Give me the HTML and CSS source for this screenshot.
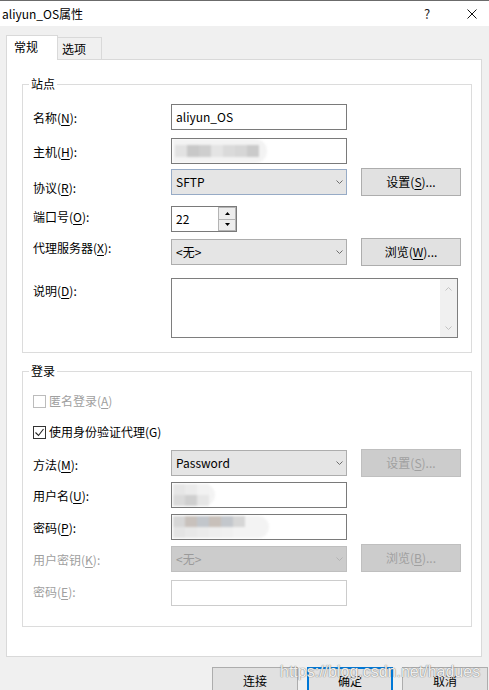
FILE: index.html
```html
<!DOCTYPE html>
<html lang="zh-CN">
<head>
<meta charset="utf-8">
<title>aliyun_OS属性</title>
<link rel="stylesheet" href="styles.css">
</head>
<body>
<div class="window">
  <header class="titlebar">
    <span class="title">aliyun_OS属性</span>
    <span class="help">?</span>
    <span class="close">
      <svg width="10" height="10" viewBox="0 0 10 10"><path d="M0.5 0.5 L9.5 9.5 M9.5 0.5 L0.5 9.5" stroke="#111" stroke-width="1" fill="none"/></svg>
    </span>
  </header>

  <div class="tabs">
    <div class="tab tab-active">常规</div>
    <div class="tab tab-idle">选项</div>
  </div>

  <div class="panel">
    <section class="group group-site">
      <div class="group-title">站点</div>

      <div class="row row-name">
        <label class="lbl">名称(<u>N</u>):</label>
        <div class="input">aliyun_OS</div>
      </div>

      <div class="row row-host">
        <label class="lbl">主机(<u>H</u>):</label>
        <div class="input">
          <div class="mosaic mosaic-host">
            <i style="background:#e2e2e2"></i><i style="background:#c8c8c8"></i><i style="background:#cecece"></i><i style="background:#e4e4e4"></i><i style="background:#dadada"></i><i style="background:#d6d6d6"></i><i style="background:#cacaca"></i>
          </div>
        </div>
      </div>

      <div class="row row-proto">
        <label class="lbl">协议(<u>R</u>):</label>
        <div class="select select-focus">
          <span>SFTP</span>
          <svg class="chev" width="7" height="4" viewBox="0 0 7 4"><path d="M0.5 0.5 L3.5 3.5 L6.5 0.5" fill="none" stroke="#6d6d6d"/></svg>
        </div>
        <button class="btn">设置(<u>S</u>)...</button>
      </div>

      <div class="row row-port">
        <label class="lbl">端口号(<u>O</u>):</label>
        <div class="spin">
          <div class="spin-field">22</div>
          <div class="spin-btns">
            <span class="spin-btn"><svg width="5" height="3" viewBox="0 0 5 3"><path d="M2.5 0 L5 3 L0 3 Z" fill="#000"/></svg></span>
            <span class="spin-btn"><svg width="5" height="3" viewBox="0 0 5 3"><path d="M0 0 L5 0 L2.5 3 Z" fill="#000"/></svg></span>
          </div>
        </div>
      </div>

      <div class="row row-proxy">
        <label class="lbl">代理服务器(<u>X</u>):</label>
        <div class="select">
          <span>&lt;无&gt;</span>
          <svg class="chev" width="7" height="4" viewBox="0 0 7 4"><path d="M0.5 0.5 L3.5 3.5 L6.5 0.5" fill="none" stroke="#6d6d6d"/></svg>
        </div>
        <button class="btn">浏览(<u>W</u>)...</button>
      </div>

      <div class="row row-desc">
        <label class="lbl">说明(<u>D</u>):</label>
        <div class="memo">
          <div class="vscroll">
            <svg width="7" height="4" viewBox="0 0 7 4"><path d="M0.5 3.5 L3.5 0.5 L6.5 3.5" fill="none" stroke="#c2c2c2"/></svg>
            <svg width="7" height="4" viewBox="0 0 7 4"><path d="M0.5 0.5 L3.5 3.5 L6.5 0.5" fill="none" stroke="#c2c2c2"/></svg>
          </div>
        </div>
      </div>
    </section>

    <section class="group group-login">
      <div class="group-title">登录</div>

      <div class="check check-anon is-disabled">
        <span class="box"></span>
        <span>匿名登录(<u>A</u>)</span>
      </div>

      <div class="check check-agent">
        <span class="box box-on">
          <svg width="11" height="11" viewBox="0 0 11 11"><path d="M1.5 5.5 L4.5 8.5 L9.5 2" fill="none" stroke="#222" stroke-width="1.1"/></svg>
        </span>
        <span>使用身份验证代理(G)</span>
      </div>

      <div class="row row-method">
        <label class="lbl">方法(<u>M</u>):</label>
        <div class="select">
          <span>Password</span>
          <svg class="chev" width="7" height="4" viewBox="0 0 7 4"><path d="M0.5 0.5 L3.5 3.5 L6.5 0.5" fill="none" stroke="#6d6d6d"/></svg>
        </div>
        <button class="btn btn-disabled">设置(<u>S</u>)...</button>
      </div>

      <div class="row row-user">
        <label class="lbl">用户名(<u>U</u>):</label>
        <div class="input">
          <div class="mosaic mosaic-user">
            <div class="mosaic-line"><i style="background:#e6e6e6"></i><i style="background:#ebebeb"></i><i style="background:#f2f2f2"></i></div>
            <div class="mosaic-line"><i style="background:#dadada"></i><i style="background:#cfcfcf"></i><i style="background:#e6e6e6"></i></div>
          </div>
        </div>
      </div>

      <div class="row row-pass">
        <label class="lbl">密码(<u>P</u>):</label>
        <div class="input">
          <div class="mosaic mosaic-pass">
            <div class="mosaic-line"><i style="background:#d6d6d6"></i><i style="background:#c8c1bc"></i><i style="background:#c2c6cb"></i><i style="background:#c8c0ba"></i><i style="background:#c3c7cc"></i><i style="background:#d6d6d6"></i></div>
            <div class="mosaic-line"><i style="background:#e4e4e4"></i><i style="background:#e8e8e8"></i><i style="background:#ebebeb"></i><i style="background:#eeeeee"></i><i style="background:#f0f0f0"></i><i style="background:#f3f3f3"></i></div>
          </div>
        </div>
      </div>

      <div class="row row-key">
        <label class="lbl is-disabled">用户密钥(<u>K</u>):</label>
        <div class="select select-disabled">
          <span>&lt;无&gt;</span>
          <svg class="chev" width="7" height="4" viewBox="0 0 7 4"><path d="M0.5 0.5 L3.5 3.5 L6.5 0.5" fill="none" stroke="#b3b3b3"/></svg>
        </div>
        <button class="btn btn-disabled">浏览(<u>B</u>)...</button>
      </div>

      <div class="row row-keypass">
        <label class="lbl is-disabled">密码(<u>E</u>):</label>
        <div class="input input-disabled"></div>
      </div>
    </section>
  </div>

  <footer class="actions">
    <button class="btn btn-foot">连接</button>
    <button class="btn btn-foot btn-default">确定</button>
    <button class="btn btn-foot">取消</button>
  </footer>

  <div class="watermark">https://blog.csdn.net/hadues</div>
</div>
</body>
</html>
```

FILE: styles.css
```css
* { box-sizing: border-box; }

html, body {
  margin: 0;
  padding: 0;
}

body {
  width: 489px;
  height: 690px;
  overflow: hidden;
  background: #f0f0f0;
  color: #000;
  font-family: "Noto Sans CJK SC", "Noto Sans", sans-serif;
  font-size: 12px;
}

u { text-decoration: underline; text-underline-offset: 2px; text-decoration-thickness: 1px; }

.window {
  position: relative;
  height: 690px;
  border-top: 1px solid #6b6b6b;
}

/* title bar */
.titlebar {
  height: 25px;
  background: #fff;
  display: flex;
  align-items: center;
  padding-left: 2px;
}
.title { flex: 1; line-height: 16px; }
.help {
  width: 12px;
  text-align: center;
  font-size: 13px;
  line-height: 16px;
  color: #222;
}
.close {
  width: 10px;
  height: 10px;
  margin-left: 34px;
  margin-right: 12px;
  display: flex;
}

/* tabs */
.tabs {
  display: flex;
  align-items: flex-end;
  height: 24px;
  margin-top: 9px;
  padding-left: 6px;
}
.tab {
  border: 1px solid #d9d9d9;
  border-bottom: none;
  line-height: 16px;
}
.tab-active {
  position: relative;
  z-index: 1;
  width: 52px;
  height: 25px;
  margin-bottom: -1px;
  background: #fff;
  padding: 3px 0 0 7px;
}
.tab-idle {
  width: 44px;
  height: 22px;
  border-left: none;
  background: #f0f0f0;
  padding: 3px 0 0 4px;
}

/* panel */
.panel {
  margin-left: 6px;
  width: 476px;
  height: 598px;
  border: 1px solid #d9d9d9;
  background: #fff;
  padding: 24px 0 0 15px;
}

.group {
  width: 450px;
  border: 1px solid #dcdcdc;
  padding-left: 10px;
}
.group-site { padding-bottom: 14px; }
.group-login { margin-top: 18px; padding-bottom: 20px; }

.group-title {
  width: max-content;
  margin: -8px 0 0 -4px;
  padding: 0 2px;
  background: #fff;
  line-height: 14px;
}

/* rows */
.row {
  display: flex;
  align-items: flex-start;
}
.lbl {
  flex: none;
  width: 138px;
  line-height: 16px;
  margin-top: 6px;
}
.is-disabled { color: #a0a0a0; }

.row-name { margin-top: 13px; }
.row-host { margin-top: 8px; }
.row-proto { margin-top: 4px; }
.row-proto .lbl { margin-top: 12px; }
.row-proto .select { margin-top: 1px; }
.row-port { margin-top: 10px; }
.row-port .lbl { margin-top: 3px; }
.row-proxy { margin-top: 6px; }
.row-proxy .lbl { margin-top: 2px; }
.row-proxy .select { margin-top: 1px; }
.row-desc { margin-top: 12px; }
.row-desc .lbl { margin-top: 5px; }

.row-method { margin-top: 9px; }
.row-method .lbl { margin-top: 8px; }
.row-method .select { margin-top: 1px; }
.row-user { margin-top: 5px; }
.row-pass { margin-top: 6px; }
.row-key { margin-top: 4px; }
.row-key .lbl { margin-top: 8px; }
.row-key .select { margin-top: 2px; }
.row-keypass { margin-top: 8px; }
.row-keypass .lbl { margin-top: 4px; }

/* controls */
.input {
  flex: none;
  width: 176px;
  height: 26px;
  border: 1px solid #7a7a7a;
  background: #fff;
  padding-left: 4px;
  line-height: 24px;
  display: flex;
  align-items: center;
  overflow: hidden;
}
.input-disabled { border-color: #cccccc; }

.select {
  flex: none;
  width: 176px;
  height: 26px;
  border: 1px solid #adadad;
  background: #e5e5e5;
  padding: 0 3px 0 4px;
  display: flex;
  align-items: center;
  justify-content: space-between;
  line-height: 16px;
}
.select-focus { border-color: #97abc6; }
.select-disabled {
  background: #cccccc;
  border-color: #bfbfbf;
  color: #9a9a9a;
}
.chev { flex: none; }

.btn {
  flex: none;
  width: 100px;
  height: 28px;
  margin-left: 14px;
  border: 1px solid #adadad;
  background: #e1e1e1;
  font: inherit;
  color: #000;
  line-height: 26px;
  padding: 0;
  text-align: center;
}
.btn-disabled {
  background: #cccccc;
  border-color: #bfbfbf;
  color: #a0a0a0;
}

/* spinner */
.spin {
  display: flex;
  height: 26px;
}
.spin-field {
  width: 47px;
  border: 1px solid #7a7a7a;
  border-right: none;
  padding-left: 4px;
  line-height: 24px;
}
.spin-btns {
  width: 19px;
  border: 1px solid #7a7a7a;
  border-left: none;
  display: flex;
  flex-direction: column;
}
.spin-btn {
  flex: 1;
  border: 1px solid #b4b4b4;
  background: #ededed;
  display: flex;
  align-items: center;
  justify-content: center;
}
.spin-btn + .spin-btn { border-top: none; }

/* memo */
.memo {
  flex: none;
  width: 287px;
  height: 60px;
  border: 1px solid #7e7e7e;
  background: #fff;
  display: flex;
  justify-content: flex-end;
}
.vscroll {
  width: 17px;
  background: #f0f0f0;
  display: flex;
  flex-direction: column;
  justify-content: space-between;
  align-items: center;
  padding: 8px 0 7px;
}

/* mosaic (blurred values) */
.mosaic {
  display: flex;
  filter: blur(0.8px);
  margin-left: -3px;
  border-radius: 0 12px 12px 0;
  background: #f3f3f3;
}
.mosaic i { display: block; width: 12px; height: 12px; }
.mosaic-host { padding: 6px 8px 6px 2px; }
.mosaic-user, .mosaic-pass { flex-direction: column; padding: 0 6px 0 0; }
.mosaic-line { display: flex; }
.mosaic-user i, .mosaic-pass i { height: 11px; }
.mosaic-pass { padding-right: 24px; }

/* checkboxes */
.check {
  display: flex;
  align-items: center;
  height: 16px;
  line-height: 16px;
}
.check-anon { margin-top: 15px; }
.check-agent { margin-top: 15px; }
.box {
  width: 13px;
  height: 13px;
  border: 1px solid #bcbcbc;
  margin-right: 3px;
  display: flex;
  align-items: center;
  justify-content: center;
  background: #fff;
}
.box-on { border-color: #333; }

/* footer */
.actions {
  display: flex;
  justify-content: flex-end;
  gap: 9px;
  margin-top: 10px;
  padding-right: 1px;
}
.btn-foot {
  width: 86px;
  margin-left: 0;
}
.btn-default {
  border: 2px solid #0078d7;
  line-height: 24px;
}

/* watermark over buttons */
.watermark {
  position: absolute;
  left: 280px;
  top: 662px;
  font-family: "Liberation Sans", Arial, sans-serif;
  font-size: 16px;
  line-height: 18px;
  color: rgba(255, 255, 255, 0.9);
  text-shadow: 0 0 1px rgba(110, 110, 110, 0.8), 0 0 1px rgba(110, 110, 110, 0.8);
  pointer-events: none;
}
```
